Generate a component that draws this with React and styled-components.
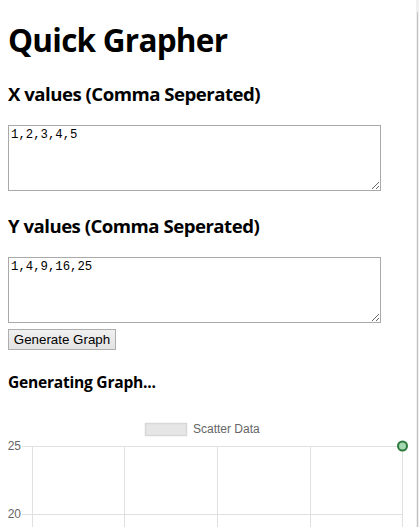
import React from "react";
import styled, { createGlobalStyle } from "styled-components";

const GlobalStyle = createGlobalStyle`
  html, body {
    margin: 0;
    padding: 0;
    overflow: hidden;
    background: #ffffff;
  }
  body {
    font-family: "Open Sans", "Noto Sans", sans-serif;
    color: #000;
  }
`;

const Page = styled.main`
  display: flex;
  flex-direction: column;
  align-items: flex-start;
  padding: 0 8px;
`;

const Title = styled.h1`
  margin: 19.6px 0 0;
  font-size: 31.5px;
  line-height: 40px;
  font-weight: 700;
  letter-spacing: -0.75px;
`;

const SectionLabel = styled.h3`
  margin: ${(p) => p.$top}px 0 0;
  font-size: 18.6px;
  line-height: 24px;
  font-weight: 700;
  letter-spacing: -0.5px;
`;

const ValuesInput = styled.textarea`
  box-sizing: border-box;
  width: 373px;
  height: 66px;
  margin: 19.4px 0 0;
  padding: 2px;
  border: 1px solid #a9a9a9;
  font-family: "Liberation Mono", monospace;
  font-size: 12.3px;
  line-height: 15px;
  color: #000;
  resize: both;
  outline: none;
`;

const GenerateButton = styled.button`
  box-sizing: border-box;
  width: 108px;
  height: 21px;
  margin: 6px 0 0;
  padding: 0;
  border: 1px solid #adadad;
  background: linear-gradient(#f0f0f0, #e3e3e3);
  font-family: "Liberation Sans", Arial, sans-serif;
  font-size: 13.33px;
  color: #000;
`;

const Status = styled.h4`
  margin: 22.3px 0 0;
  font-size: 15.6px;
  line-height: 20px;
  font-weight: 700;
  letter-spacing: -0.25px;
`;

const ChartWrap = styled.div`
  margin-top: 7.7px;
  width: 402px;
  height: 200px;
`;

const ScrollTrack = styled.div`
  position: fixed;
  top: 0;
  right: 0;
  width: 3px;
  height: 100vh;
  background: #f0f0f0;
`;

const ScrollThumb = styled.div`
  position: absolute;
  top: 12px;
  left: 1px;
  width: 1px;
  bottom: 0;
  background: #c2c2c2;
`;

const gridColor = "#e0e0e0";
const xLines = [24, 116, 209, 302, 394];

function ScatterChart() {
  return (
    <svg width="402" height="200" viewBox="0 0 402 200">
      <rect x="137.5" y="23.5" width="41" height="12" fill="#e6e6e6" stroke="#d8d8d8" strokeWidth="1.5" />
      <text x="185" y="33" fontFamily="Liberation Sans, Arial, sans-serif" fontSize="12" fill="#666">
        Scatter Data
      </text>
      <line x1="14" y1="46.5" x2="394" y2="46.5" stroke={gridColor} />
      <line x1="14" y1="114.5" x2="394" y2="114.5" stroke={gridColor} />
      {xLines.map((x) => (
        <line key={x} x1={x + 0.5} y1="46" x2={x + 0.5} y2="200" stroke={gridColor} />
      ))}
      <text x="13" y="50" textAnchor="end" fontFamily="Liberation Sans, Arial, sans-serif" fontSize="12" fill="#666">
        25
      </text>
      <text x="13" y="118" textAnchor="end" fontFamily="Liberation Sans, Arial, sans-serif" fontSize="12" fill="#666">
        20
      </text>
      <circle cx="394.5" cy="46" r="4.5" fill="#a3d8b0" stroke="#2c7a3c" strokeWidth="2" />
    </svg>
  );
}

export default function App() {
  return (
    <>
      <GlobalStyle />
      <Page>
        <Title>Quick Grapher</Title>
        <SectionLabel $top={22}>X values (Comma Seperated)</SectionLabel>
        <ValuesInput defaultValue="1,2,3,4,5" />
        <SectionLabel $top={22.6}>Y values (Comma Seperated)</SectionLabel>
        <ValuesInput defaultValue="1,4,9,16,25" />
        <GenerateButton type="button">Generate Graph</GenerateButton>
        <Status>Generating Graph...</Status>
        <ChartWrap>
          <ScatterChart />
        </ChartWrap>
      </Page>
      <ScrollTrack>
        <ScrollThumb />
      </ScrollTrack>
    </>
  );
}
